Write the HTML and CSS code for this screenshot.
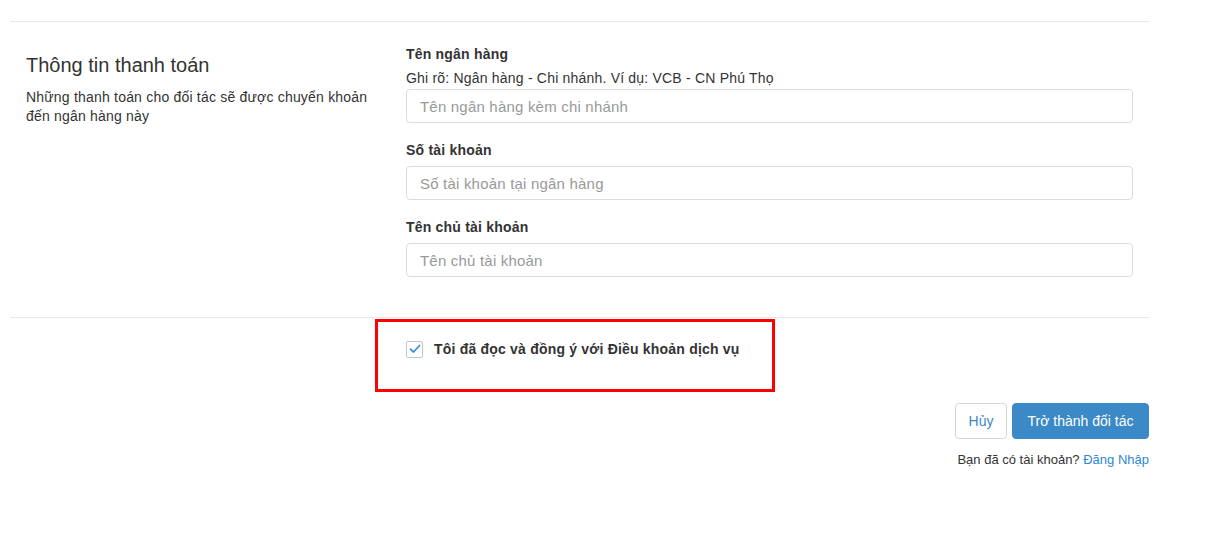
FILE: index.html
```html
<!DOCTYPE html>
<html lang="vi">
<head>
  <meta charset="UTF-8">
  <meta name="viewport" content="width=device-width, initial-scale=1.0">
  <title>Đăng ký đối tác</title>
  <link rel="stylesheet" href="styles.css">
</head>
<body>
  <div class="wrap">
    <hr class="line top">

    <div class="row">
      <div class="col-side">
        <h3 class="side-title">Thông tin thanh toán</h3>
        <p class="side-desc">Những thanh toán cho đối tác sẽ được chuyển khoản đến ngân hàng này</p>
      </div>
      <div class="col-main">
        <div class="form-group">
          <label for="bank">Tên ngân hàng</label>
          <p class="help">Ghi rõ: Ngân hàng - Chi nhánh. Ví dụ: VCB - CN Phú Thọ</p>
          <input type="text" id="bank" class="form-control" placeholder="Tên ngân hàng kèm chi nhánh">
        </div>
        <div class="form-group">
          <label for="account">Số tài khoản</label>
          <input type="text" id="account" class="form-control" placeholder="Số tài khoản tại ngân hàng">
        </div>
        <div class="form-group">
          <label for="owner">Tên chủ tài khoản</label>
          <input type="text" id="owner" class="form-control" placeholder="Tên chủ tài khoản">
        </div>
      </div>
    </div>

    <hr class="line">

    <div class="terms-row">
      <div class="terms">
        <label class="check">
          <span class="box">
            <svg width="12" height="10" viewBox="0 0 12 10"><path d="M1.5 5.2 L4.5 8 L10.5 1.5" fill="none" stroke="#3d8fd8" stroke-width="1.8" stroke-linecap="round" stroke-linejoin="round"/></svg>
          </span>
          Tôi đã đọc và đồng ý với Điều khoản dịch vụ
        </label>
      </div>
    </div>

    <div class="actions">
      <button class="btn btn-default">Hủy</button>
      <button class="btn btn-primary">Trở thành đối tác</button>
    </div>
    <p class="login-note">Bạn đã có tài khoản? <a href="#">Đăng Nhập</a></p>
  </div>
</body>
</html>
```

FILE: styles.css
```css
body {
  margin: 0;
  font-family: "Liberation Sans", Arial, sans-serif;
  font-size: 14px;
  line-height: 20px;
  letter-spacing: 0.2px;
  color: #333;
  background: #fff;
}
.wrap {
  width: 1139px;
  margin-left: 10px;
}
.line {
  border: 0;
  border-top: 1px solid #e8e8e8;
  margin: 0;
}
.line.top {
  margin-top: 21px;
}
.row {
  display: flex;
  padding-top: 22px;
  padding-bottom: 23px;
}
.col-side {
  width: 348px;
  padding: 0 15px 0 16px;
}
.col-main {
  width: 727px;
  padding: 0 16px 0 17px;
}
.side-title {
  font-size: 20px;
  font-weight: normal;
  letter-spacing: 0;
  line-height: 24px;
  margin: 9px 0 11px;
}
.side-desc {
  margin: 0;
  line-height: 19px;
}
.form-group {
  margin-bottom: 17px;
}
.form-group label {
  display: block;
  font-weight: bold;
  margin-bottom: 6px;
}
.help {
  margin: -2px 0 1px;
}
.form-control {
  display: block;
  box-sizing: border-box;
  width: 100%;
  height: 34px;
  padding: 6px 13px;
  font-family: inherit;
  font-size: 15px;
  letter-spacing: 0.2px;
  color: #555;
  border: 1px solid #dcdcdc;
  border-radius: 4px;
  outline: none;
}
.form-control::placeholder {
  color: #999;
}
.terms-row {
  padding-left: 365px;
  padding-top: 1px;
}
.terms {
  width: 366px;
  height: 50px;
  border: 3px solid #ff0000;
  padding: 17px 0 0 28px;
}
.check {
  display: flex;
  align-items: center;
  gap: 11px;
  font-weight: bold;
}
.box {
  width: 15px;
  height: 15px;
  border: 1px solid #b9c9d3;
  border-radius: 2px;
  display: flex;
  align-items: center;
  justify-content: center;
}
.actions {
  display: flex;
  justify-content: flex-end;
  gap: 5px;
  margin-top: 11px;
}
.btn {
  height: 36px;
  padding: 0;
  font-family: inherit;
  font-size: 14px;
  letter-spacing: 0;
  border-radius: 4px;
  border: 1px solid transparent;
  cursor: pointer;
}
.btn-default {
  background: #fff;
  border-color: #d5d5d5;
  color: #3a87c8;
  width: 52px;
}
.btn-primary {
  background: #3b89c7;
  border-color: #3b89c7;
  color: #fff;
  width: 137px;
}
.login-note {
  text-align: right;
  font-size: 13px;
  letter-spacing: 0;
  margin: 11px 0 0;
}
.login-note a {
  color: #2f86d6;
  text-decoration: none;
}
```
